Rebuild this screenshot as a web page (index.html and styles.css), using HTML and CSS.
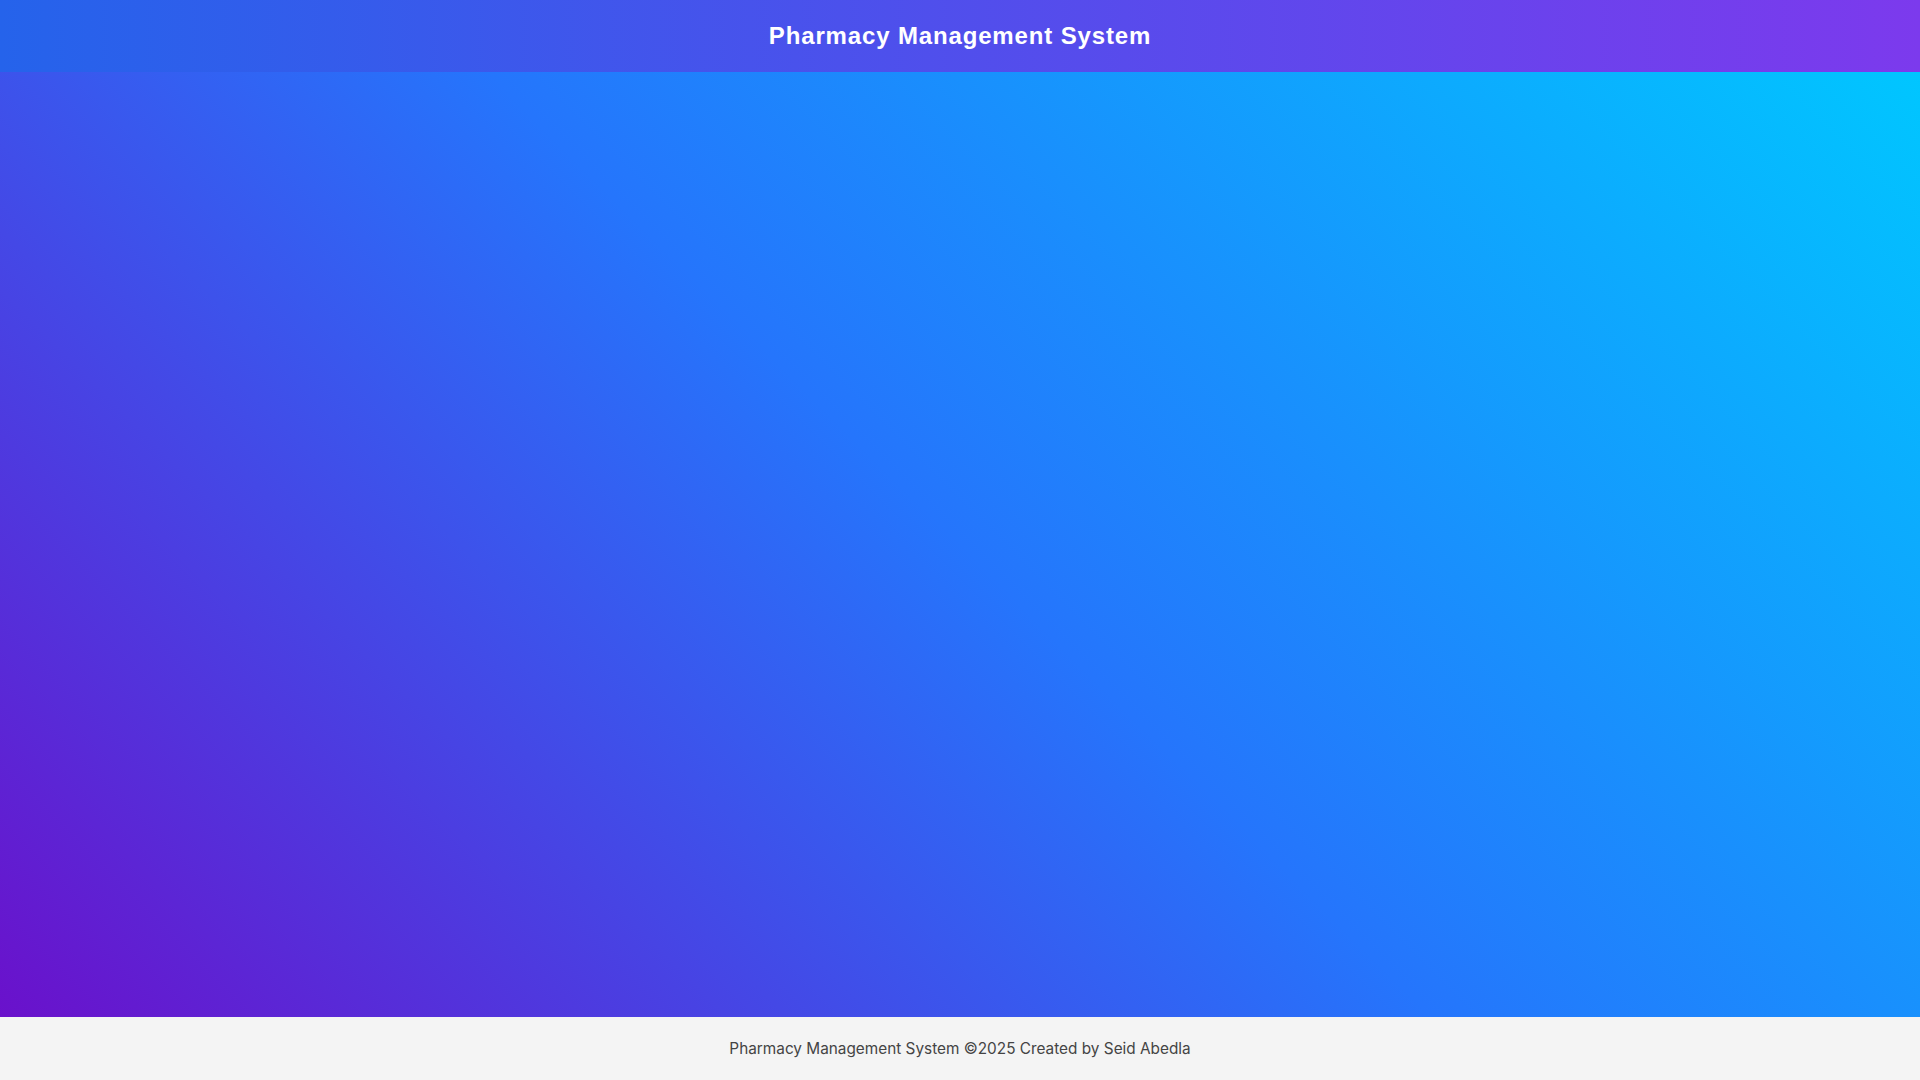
FILE: index.html
```html
<!DOCTYPE html>
<html lang="en">
<head>
<meta charset="utf-8">
<title>Pharmacy Management System</title>
<link rel="stylesheet" href="styles.css">
</head>
<body>
<div class="page">
  <header class="topbar">
    <h1 class="title">Pharmacy Management System</h1>
  </header>
  <main class="content"></main>
  <footer class="footer">Pharmacy Management System ©2025 Created by Seid Abedla</footer>
</div>
</body>
</html>
```
FILE: styles.css
```css
html, body {
  margin: 0;
  padding: 0;
  height: 100%;
}
body {
  font-family: Inter, "Noto Sans", sans-serif;
}
.page {
  display: flex;
  flex-direction: column;
  min-height: 100vh;
}
.topbar {
  background: linear-gradient(to right, #2563eb, #7c3aed);
  height: 72px;
  display: flex;
  align-items: center;
  justify-content: center;
  flex-shrink: 0;
}
.title {
  margin: 0;
  color: #ffffff;
  font-family: "Liberation Sans", Arial, sans-serif;
  font-weight: 700;
  font-size: 24px;
  letter-spacing: 0.85px;
  line-height: 28px;
}
.content {
  flex: 1;
  background: linear-gradient(45deg, #6a11cb 0%, #2575fc 50%, #00c6ff 100%);
}
.footer {
  flex-shrink: 0;
  height: 63px;
  display: flex;
  align-items: center;
  justify-content: center;
  background: #f4f4f4;
  color: #444444;
  font-family: Inter, sans-serif;
  font-size: 15.35px;
  font-weight: 400;
}
```
